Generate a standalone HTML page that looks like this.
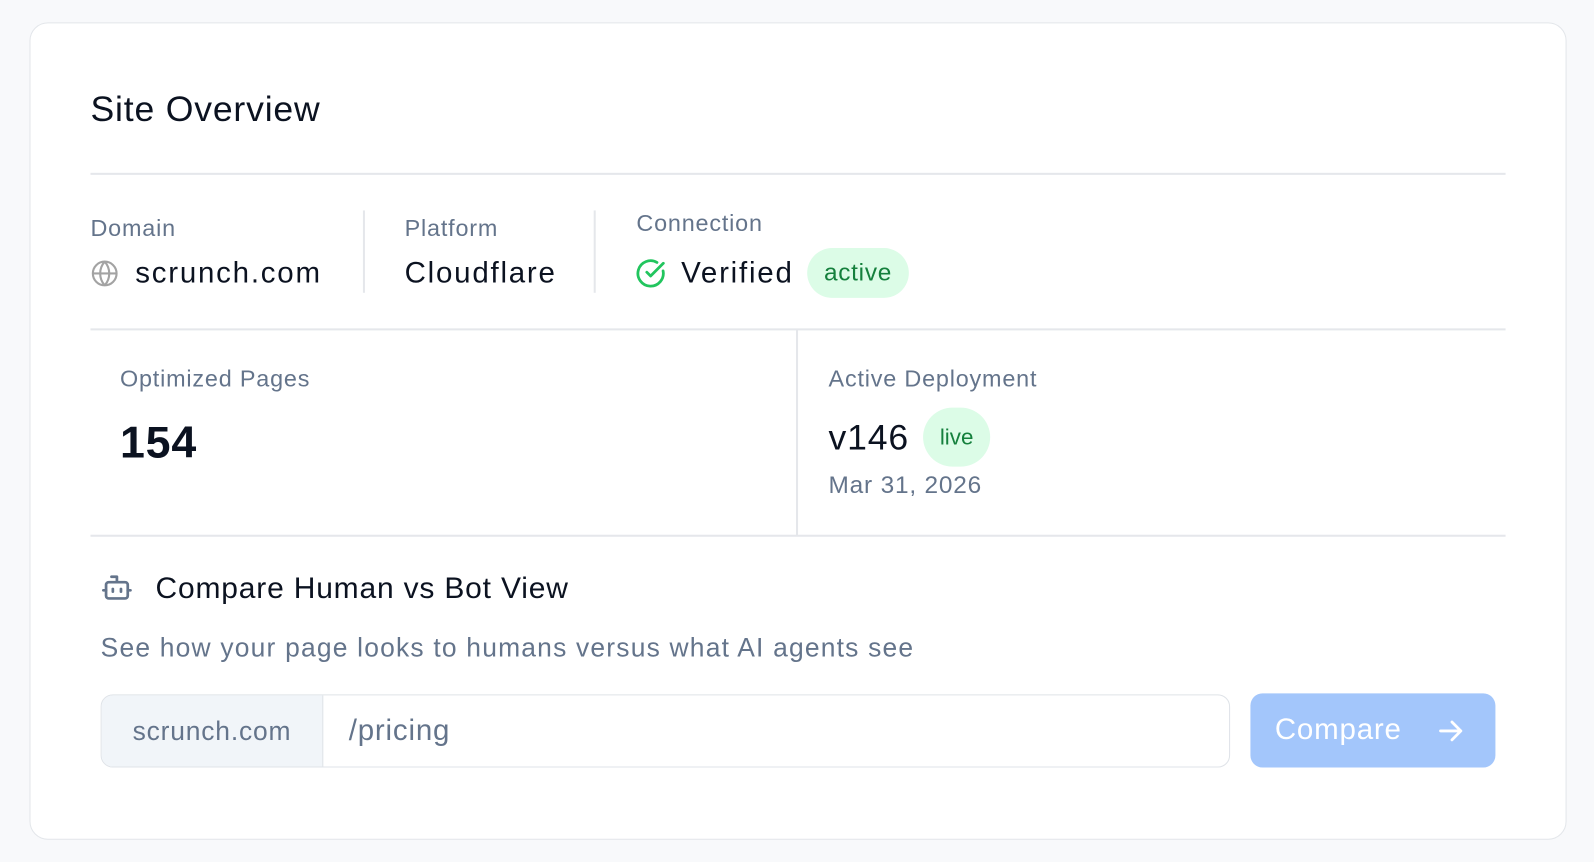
<!DOCTYPE html>
<html><head><meta charset="utf-8"><style>
*{box-sizing:border-box;margin:0;padding:0}
body{width:1594px;height:862px;background:#f8f9fb;font-family:"Liberation Sans",sans-serif;position:relative;overflow:hidden;letter-spacing:0.05em}
#w{position:absolute;left:0;top:0;width:1568px;height:848px;transform:scale(1.0166);transform-origin:0 0}
.card{position:absolute;left:29px;top:22px;width:1512px;height:804px;background:#fff;border:1.5px solid #e3e6ea;border-radius:18px}
.a{position:absolute;white-space:nowrap}
.lbl{font-size:23px;color:#64748b}
.val{font-size:29px;color:#0b1220;letter-spacing:0.06em}
.hr{position:absolute;left:89px;width:1392px;height:2px;background:#e5e7eb}
.vr{position:absolute;width:2px;background:#e5e7eb}
</style></head><body><div id="w">
<div class="card"></div>
<div class="a" style="left:89px;top:88px;font-size:35px;color:#0b1220">Site Overview</div>
<div class="hr" style="top:170px"></div>
<div class="a lbl" style="left:89px;top:211px">Domain</div>
<div class="a lbl" style="left:398px;top:211px">Platform</div>
<div class="a lbl" style="left:626px;top:206px">Connection</div>
<div class="vr" style="left:357px;top:207px;height:81px"></div>
<div class="vr" style="left:584px;top:207px;height:81px"></div>
<svg class="a" style="left:89px;top:255px" width="28" height="28" viewBox="0 0 24 24" fill="none" stroke="#a3a3a3" stroke-width="1.8"><circle cx="12" cy="12" r="10"/><path d="M2 12h20M12 2a15 15 0 0 1 0 20M12 2a15 15 0 0 0 0 20"/></svg>
<div class="a val" style="left:133px;top:253px">scrunch.com</div>
<div class="a val" style="left:398px;top:253px">Cloudflare</div>
<svg class="a" style="left:625px;top:254px" width="30" height="30" viewBox="0 0 24 24" fill="none" stroke="#22c55e" stroke-width="2.2" stroke-linecap="round" stroke-linejoin="round"><path d="M21.8 10A10 10 0 1 1 17 3.3"/><path d="M9 11l3 3L22 4"/></svg>
<div class="a val" style="left:670px;top:253px">Verified</div>
<div class="a" style="left:794px;top:244px;width:100px;height:49px;border-radius:25px;background:#dcfce7;color:#15803d;font-size:24px;line-height:49px;text-align:center;letter-spacing:0.03em">active</div>
<div class="hr" style="top:323px"></div>
<div class="vr" style="left:783px;top:324px;height:203px"></div>
<div class="a lbl" style="left:118px;top:359px">Optimized Pages</div>
<div class="a" style="left:118px;top:411px;font-size:44px;font-weight:bold;color:#0b1220">154</div>
<div class="a lbl" style="left:815px;top:359px">Active Deployment</div>
<div class="a" style="left:815px;top:411px;font-size:35px;color:#0b1220">v146</div>
<div class="a" style="left:908px;top:401px;width:66px;height:58px;border-radius:29px;background:#dcfce7;color:#15803d;font-size:22px;line-height:58px;text-align:center;letter-spacing:0">live</div>
<div class="a lbl" style="left:815px;top:464px;font-size:24px">Mar 31, 2026</div>
<div class="hr" style="top:526px"></div>
<svg class="a" style="left:99px;top:562px" width="32" height="32" viewBox="0 0 24 24" fill="none" stroke="#64748b" stroke-width="2" stroke-linecap="round" stroke-linejoin="round"><path d="M12 8V4H8"/><rect x="4" y="8" width="16" height="12" rx="2"/><path d="M2 14h2M20 14h2M15 13v2M9 13v2"/></svg>
<div class="a" style="left:153px;top:562px;font-size:29.5px;color:#0b1220">Compare Human vs Bot View</div>
<div class="a" style="left:99px;top:622px;font-size:26px;color:#64748b;letter-spacing:0.045em">See how your page looks to humans versus what AI agents see</div>
<div class="a" style="left:99px;top:683px;width:1111px;height:72px;border:1.5px solid #dfe3e8;border-radius:12px;overflow:hidden">
 <div style="position:absolute;left:0;top:0;width:218px;height:100%;background:#f1f5f9;border-right:1.5px solid #dfe3e8;color:#64748b;font-size:26px;line-height:70px;text-align:center">scrunch.com</div>
 <div style="position:absolute;left:243px;top:0;line-height:70px;font-size:29px;color:#64748b">/pricing</div>
</div>
<div class="a" style="left:1230px;top:682px;width:241px;height:73px;border-radius:12px;background:#a3c6fb;color:#fff;font-size:29px;line-height:73px;padding-left:24px">Compare
<svg style="position:absolute;left:182px;top:22px" width="30" height="30" viewBox="0 0 24 24" fill="none" stroke="#fff" stroke-width="2.2" stroke-linecap="round" stroke-linejoin="round"><path d="M4 12h16M13 5l7 7-7 7"/></svg></div>
</div></body></html>
